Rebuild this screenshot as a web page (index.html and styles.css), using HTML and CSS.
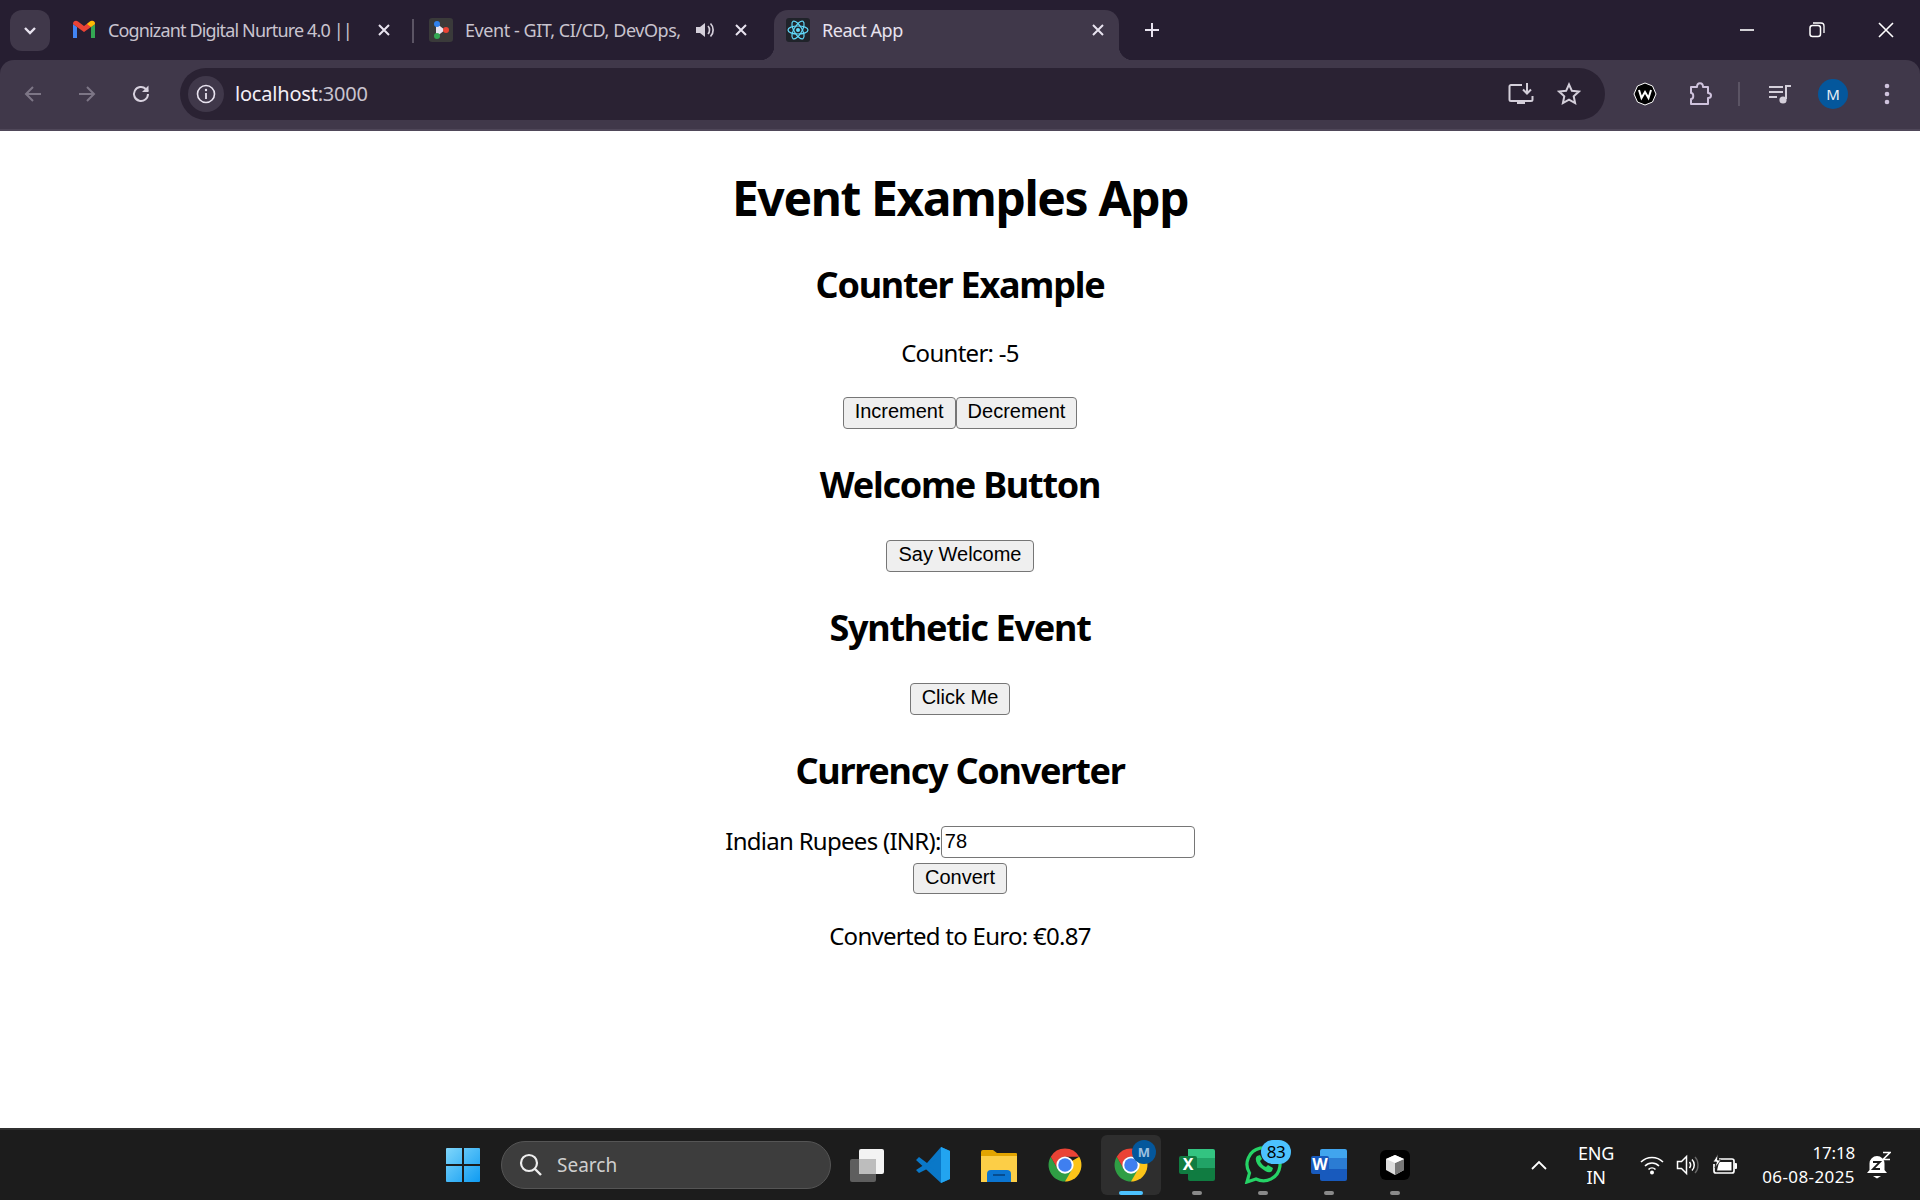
FILE: index.html
```html
<!DOCTYPE html>
<html lang="en">
<head>
<meta charset="utf-8">
<title>React App</title>
<link rel="stylesheet" href="styles.css">
</head>
<body>
<header class="chrome">
  <div class="tabstrip">
    <div class="tabsearch"><svg width="14" height="10" viewBox="0 0 14 10"><path d="M2 2l5 5 5-5" fill="none" stroke="#e8e3ef" stroke-width="2.4"/></svg></div>
    <div class="tab tab-one">
      <svg class="fav" width="24" height="24" viewBox="0 0 24 24"><path d="M1 20V6l4 3v11z" fill="#4285f4"/><path d="M19 20V9l4-3v14z" fill="#34a853"/><path d="M1 6c0-3 3-4 5-2.500L12 8l6-4.500C20 2 23 3 23 6l-4 3-7 5-7-5z" fill="#ea4335"/><path d="M19 9l4-3c0-3-3-4-5-2.500L15 6z" fill="#fbbc04"/></svg>
      <span class="tab-title">Cognizant Digital Nurture 4.0 ||</span>
      <svg class="x" width="14" height="14" viewBox="0 0 14 14"><path d="M2 2l10 10M12 2L2 12" stroke="#e8e3ef" stroke-width="2"/></svg>
    </div>
    <div class="tabsep"></div>
    <div class="tab tab-two">
      <svg class="fav" width="24" height="24" viewBox="0 0 24 24"><rect width="24" height="24" rx="3" fill="#3a3a3a"/><path d="M7 5l9 7-9 7z" fill="#e8e3ef"/><circle cx="8" cy="6" r="3" fill="#2f80ed"/><circle cx="17" cy="12" r="3" fill="#ea4335"/><circle cx="8" cy="18" r="3" fill="#34a853"/></svg>
      <span class="tab-title">Event - GIT, CI/CD, DevOps,</span>
      <svg class="spk" width="22" height="22" viewBox="0 0 22 22"><path d="M3 8h4l5-4v14l-5-4H3z" fill="#d4cfda"/><path d="M15 7c2 2 2 6 0 8M17.500 4.500c3.500 3.500 3.500 9.500 0 13" fill="none" stroke="#d4cfda" stroke-width="1.700"/></svg>
      <svg class="x" width="14" height="14" viewBox="0 0 14 14"><path d="M2 2l10 10M12 2L2 12" stroke="#e8e3ef" stroke-width="2"/></svg>
    </div>
    <div class="tab tab-active">
      <svg class="fav" width="24" height="24" viewBox="0 0 24 24"><rect width="24" height="24" rx="3" fill="#20232a"/><g fill="none" stroke="#61dafb" stroke-width="1.200"><ellipse cx="12" cy="12" rx="10" ry="4"/><ellipse cx="12" cy="12" rx="10" ry="4" transform="rotate(60 12 12)"/><ellipse cx="12" cy="12" rx="10" ry="4" transform="rotate(120 12 12)"/></g><circle cx="12" cy="12" r="2" fill="#61dafb"/></svg>
      <span class="tab-title active-title">React App</span>
      <svg class="x" width="14" height="14" viewBox="0 0 14 14"><path d="M2 2l10 10M12 2L2 12" stroke="#e8e3ef" stroke-width="2"/></svg>
    </div>
    <svg class="plus" width="18" height="18" viewBox="0 0 18 18"><path d="M9 2v14M2 9h14" stroke="#e8e3ef" stroke-width="2"/></svg>
    <div class="winctl">
      <svg width="16" height="16" viewBox="0 0 16 16"><path d="M1 8h14" stroke="#fff" stroke-width="1.600"/></svg>
      <svg width="16" height="16" viewBox="0 0 16 16"><rect x="1" y="3.500" width="10.500" height="11" rx="2.500" fill="none" stroke="#fff" stroke-width="1.500"/><path d="M4 1h8c2 0 3 1 3 3v7" fill="none" stroke="#fff" stroke-width="1.300"/></svg>
      <svg width="16" height="16" viewBox="0 0 16 16"><path d="M1 1l14 14M15 1L1 15" stroke="#fff" stroke-width="1.600"/></svg>
    </div>
  </div>
  <div class="toolbar">
    <svg class="nav nav-back" width="20" height="20" viewBox="0 0 20 20"><path d="M18 10H3M10 3l-7 7 7 7" fill="none" stroke="#7d7686" stroke-width="2"/></svg>
    <svg class="nav nav-fwd" width="20" height="20" viewBox="0 0 20 20"><path d="M2 10h15M10 3l7 7-7 7" fill="none" stroke="#7d7686" stroke-width="2"/></svg>
    <svg class="nav nav-reload" width="22" height="22" viewBox="0 0 22 22"><path d="M18 11a7 7 0 1 1-2.200-5.100L18 8" fill="none" stroke="#d8d2df" stroke-width="2"/><path d="M18.500 2.500v6.500H12z" fill="#d8d2df"/></svg>
    <div class="omnibox">
      <div class="siteinfo"><svg width="20" height="20" viewBox="0 0 20 20"><circle cx="10" cy="10" r="8.500" fill="none" stroke="#e8e3ef" stroke-width="1.600"/><path d="M10 9v6" stroke="#e8e3ef" stroke-width="1.800"/><circle cx="10" cy="6" r="1.200" fill="#e8e3ef"/></svg></div>
      <span class="url">localhost<span class="url-port">:3000</span></span>
      <svg class="om-install" width="26" height="24" viewBox="0 0 26 24"><path d="M14 3H3a1.500 1.500 0 0 0-1.500 1.500v13A1.500 1.500 0 0 0 3 19h20a1.500 1.500 0 0 0 1.500-1.500V14" fill="none" stroke="#d4cfda" stroke-width="2"/><path d="M9 19h8v3H9z" fill="#d4cfda"/><path d="M19 1v10M15 7.500l4 4 4-4" fill="none" stroke="#d4cfda" stroke-width="2"/></svg>
      <svg class="om-star" width="24" height="24" viewBox="0 0 24 24"><path d="M12 2.500l2.900 6.300 6.900.8-5.100 4.700 1.400 6.800-6.100-3.400-6.100 3.400 1.400-6.800-5.100-4.700 6.900-.8z" fill="none" stroke="#d4cfda" stroke-width="2"/></svg>
    </div>
    <svg class="tb-w" width="24" height="24" viewBox="0 0 24 24"><path d="M12 1l7.500 3 3.500 8-3.500 8-7.500 3-7.500-3L1 12l3.500-8z" fill="#000" stroke="#fff" stroke-width="1"/><path d="M6 8l2.500 8 3.500-6 3.500 6L18 8" fill="none" stroke="#fff" stroke-width="2"/></svg>
    <svg class="tb-puzzle" width="24" height="26" viewBox="0 0 24 26"><path d="M3 6h6c0-5 6-5 6 0h5v6c4 0 4 5 0 5v6H3v-5c3 0 3-6 0-6z" fill="none" stroke="#cfc3dd" stroke-width="2" stroke-linejoin="round"/></svg>
    <div class="tb-sep"></div>
    <svg class="tb-media" width="24" height="22" viewBox="0 0 24 22"><path d="M1 4h14M1 9h14M1 14h8" stroke="#d4cfda" stroke-width="2"/><path d="M18 16V3h5" fill="none" stroke="#d4cfda" stroke-width="2"/><circle cx="15" cy="17" r="3.600" fill="#d4cfda"/></svg>
    <div class="avatar">M</div>
    <svg class="tb-menu" width="6" height="22" viewBox="0 0 6 22"><circle cx="3" cy="3" r="2.300" fill="#cfc3dd"/><circle cx="3" cy="11" r="2.300" fill="#cfc3dd"/><circle cx="3" cy="19" r="2.300" fill="#cfc3dd"/></svg>
  </div>
</header>

<main class="page">
  <h1 class="title">Event Examples App</h1>
  <section>
    <h2 class="heading">Counter Example</h2>
    <p class="line">Counter: -5</p>
    <div class="row row-after-p"><button class="btn">Increment</button><button class="btn">Decrement</button></div>
  </section>
  <section>
    <h2 class="heading">Welcome Button</h2>
    <div class="row"><button class="btn">Say Welcome</button></div>
  </section>
  <section>
    <h2 class="heading">Synthetic Event</h2>
    <div class="row"><button class="btn">Click Me</button></div>
  </section>
  <section>
    <h2 class="heading">Currency Converter</h2>
    <div class="row"><label class="inr">Indian Rupees (INR):</label><input class="field" value="78"></div>
    <div class="row row-convert"><button class="btn btn-convert">Convert</button></div>
    <p class="line line-result">Converted to Euro: €0.87</p>
  </section>
</main>

<footer class="taskbar">
  <svg class="ti ti-win" width="36" height="36" viewBox="0 0 36 36"><defs><linearGradient id="w" x1="0" y1="0" x2="1" y2="1"><stop offset="0" stop-color="#7fd6fb"/><stop offset="1" stop-color="#0e9bf2"/></linearGradient></defs><path d="M1 2a1 1 0 0 1 1-1h15v16H1zM19 1h15a1 1 0 0 1 1 1v15H19zM1 19h16v16H2a1 1 0 0 1-1-1zM19 19h16v15a1 1 0 0 1-1 1H19z" fill="url(#w)"/></svg>
  <div class="search">
    <svg width="26" height="26" viewBox="0 0 26 26"><circle cx="11" cy="11" r="8" fill="none" stroke="#eee" stroke-width="2.200"/><path d="M17 17l6 6" stroke="#eee" stroke-width="2.400"/></svg>
    <span class="search-text">Search</span>
  </div>
  <div class="apps">
    <div class="app"><svg width="36" height="36" viewBox="0 0 36 36"><rect x="1" y="12" width="26" height="23" rx="2" fill="#5e5e5e"/><rect x="10" y="2" width="25" height="25" rx="2" fill="#f3f3f3"/><rect x="10" y="12" width="17" height="15" fill="#bdbdbd"/></svg></div>
    <div class="app"><svg width="38" height="38" viewBox="0 0 38 38"><path d="M27 1l9 4v28l-9 4L2 14l3-3 8 6z" fill="#0a78c8"/><path d="M27 1l9 4v28l-9 4z" fill="#22a4f0"/><path d="M27 10L13 19l14 10zM2 24l11-7 4 4-12 6z" fill="#0a78c8"/></svg></div>
    <div class="app"><svg width="38" height="36" viewBox="0 0 38 36"><path d="M1 5a2 2 0 0 1 2-2h10l4 3h19a1 1 0 0 1 1 1v5H1z" fill="#e2a400"/><path d="M1 9h36v26H1z" fill="#fcce47"/><path d="M7 35v-8a4 4 0 0 1 4-4h16a4 4 0 0 1 4 4v8z" fill="#0b75d1"/><path d="M13 28h12" stroke="#063f78" stroke-width="1.500"/></svg></div>
    <div class="app"><svg class="chr" width="36" height="36" viewBox="0 0 48 48"><path d="M43 13A22 22 0 0 1 24 46L24 24z" fill="#fcc419"/><path d="M5 13A22 22 0 0 0 24 46L33.500 29.500 14.500 29.500z" fill="#2f9e44"/><path d="M24 2A22 22 0 0 1 43 13H24a11 11 0 0 0-9.500 16.500L5 13A22 22 0 0 1 24 2z" fill="#ea4335"/><circle cx="24" cy="24" r="11.500" fill="#fff"/><circle cx="24" cy="24" r="9" fill="#3f7ff0"/></svg></div>
    <div class="app app-active"><svg class="chr" width="36" height="36" viewBox="0 0 48 48"><path d="M43 13A22 22 0 0 1 24 46L24 24z" fill="#fcc419"/><path d="M5 13A22 22 0 0 0 24 46L33.500 29.500 14.500 29.500z" fill="#2f9e44"/><path d="M24 2A22 22 0 0 1 43 13H24a11 11 0 0 0-9.500 16.500L5 13A22 22 0 0 1 24 2z" fill="#ea4335"/><circle cx="24" cy="24" r="11.500" fill="#fff"/><circle cx="24" cy="24" r="9" fill="#3f7ff0"/></svg><span class="chip-m">M</span><span class="bar bar-on"></span></div>
    <div class="app"><svg width="36" height="34" viewBox="0 0 36 34"><path d="M9 1h25a2 2 0 0 1 2 2v7H9z" fill="#33c481"/><path d="M9 10h13v10H9z" fill="#21a366"/><path d="M22 10h14v10H22z" fill="#21a366"/><path d="M9 20h27v11a2 2 0 0 1-2 2H11a2 2 0 0 1-2-2z" fill="#107c41"/><rect y="8" width="18" height="18" rx="2" fill="#107c41"/></svg><span class="app-letter">X</span><span class="bar"></span></div>
    <div class="app"><svg width="38" height="38" viewBox="0 0 38 38"><path d="M3 36l2.500-9A16.500 16.500 0 1 1 12 33z" fill="none" stroke="#25d366" stroke-width="3.200"/><path d="M13 10c-3 3 0 9 4 12s8 6 11 3l1-3-5-3-2 2c-3-1-5-4-6-6l2-2-2-4z" fill="#25d366"/></svg><span class="badge">83</span><span class="bar"></span></div>
    <div class="app"><svg width="36" height="34" viewBox="0 0 36 34"><path d="M9 3a2 2 0 0 1 2-2h23a2 2 0 0 1 2 2v7H9z" fill="#41a5ee"/><path d="M9 10h27v11H9z" fill="#2b7cd3"/><path d="M9 21h27v10a2 2 0 0 1-2 2H11a2 2 0 0 1-2-2z" fill="#185abd"/><rect y="8" width="18" height="18" rx="2" fill="#185abd"/></svg><span class="app-letter">W</span><span class="bar"></span></div>
    <div class="app"><svg width="30" height="30" viewBox="0 0 30 30"><rect width="30" height="30" rx="6" fill="#000"/><path d="M15 5l9 4v11l-9 5-9-5V9z" fill="#ddd"/><path d="M15 13l9-4v11l-9 5z" fill="#777"/><path d="M6 9l9 4 9-4-9-4z" fill="#fff"/></svg><span class="bar"></span></div>
  </div>
  <svg class="tray-chev" width="18" height="10" viewBox="0 0 18 10"><path d="M2 9l7-7 7 7" fill="none" stroke="#fff" stroke-width="1.800"/></svg>
  <div class="lang">ENG<br>IN</div>
  <svg class="tr-wifi" width="24" height="20" viewBox="0 0 24 20"><path d="M1 7c6-6 16-6 22 0M5 11c4-4 10-4 14 0M8.500 14.500c2-2 5-2 7 0" fill="none" stroke="#fff" stroke-width="1.600"/><circle cx="12" cy="17.500" r="2" fill="#fff"/></svg>
  <svg class="tr-vol" width="24" height="22" viewBox="0 0 24 22"><path d="M1.500 7.500h4l5-5v17l-5-5h-4z" fill="none" stroke="#fff" stroke-width="1.500"/><path d="M13.500 8c1.500 2 1.500 4 0 6M16 5.500c3 3 3 8 0 11" fill="none" stroke="#fff" stroke-width="1.500"/><path d="M19 3c4 4 4 12 0 16" fill="none" stroke="#666" stroke-width="1.400"/></svg>
  <svg class="tr-bat" width="26" height="24" viewBox="0 0 26 24"><path d="M8 6h13a2 2 0 0 1 2 2v10a2 2 0 0 1-2 2H5a2 2 0 0 1-2-2V11" fill="none" stroke="#fff" stroke-width="1.700"/><path d="M8 9h12.500v8.500H6z" fill="#fff"/><rect x="23.500" y="10" width="2.500" height="6" rx="1" fill="#fff"/><path d="M7 1L2 9h3.500L4 15l6-8H6.500z" fill="#fff" stroke="#1c1c1c" stroke-width=".8"/></svg>
  <div class="clock"><span>17:18</span><span class="date">06-08-2025</span></div>
  <svg class="tr-bell" width="24" height="28" viewBox="0 0 24 28"><path d="M10 5a7.500 7.500 0 0 1 7.500 7.500V19l2.500 3H0l2.500-3v-6.500A7.500 7.500 0 0 1 10 5z" fill="#fff"/><path d="M6 25h8l-4 2.500z" fill="#fff"/><path d="M6 11h7l-7 7h7" fill="none" stroke="#1c1c1c" stroke-width="1.800"/><path d="M16 1.500h7l-7 7h7" fill="none" stroke="#fff" stroke-width="1.600"/></svg>
</footer>
</body>
</html>
```

FILE: styles.css
```css
* { box-sizing: border-box; }
html, body { margin: 0; padding: 0; }
body {
  width: 1920px;
  height: 1200px;
  overflow: hidden;
  display: flex;
  flex-direction: column;
  background: #fff;
  font-family: "Noto Sans", "Open Sans", sans-serif;
  color: #000;
}

/* Browser chrome */
.chrome { height: 131px; background: #261e31; flex: none; }
.tabstrip { height: 60px; display: flex; align-items: flex-start; padding-left: 10px; }
.tabsearch {
  width: 40px; height: 41px; margin-top: 10px;
  background: #40384a; border-radius: 12px;
  display: flex; align-items: center; justify-content: center;
}
.tab { display: flex; align-items: center; height: 50px; margin-top: 10px; position: relative; }
.tab-title { font-size: 18px; color: #c9c4cf; white-space: nowrap; overflow: hidden; letter-spacing: -.45px; line-height: 24px; }
.active-title { color: #e8e3ef; }
.fav { flex: none; }
.tab-one { width: 332px; margin-left: 22px; padding-bottom: 10px; }
.tab-one .tab-title { width: 249px; margin-left: 12px; letter-spacing: -.85px; flex: none; }
.tab-one .x { margin-left: 20px; }
.tabsep { width: 2px; height: 24px; background: #5b5464; margin: 19px 0 0 8px; }
.tab-two { width: 345px; margin-left: 15px; padding-bottom: 10px; }
.tab-two .tab-title { width: 216px; margin-left: 12px; }
.tab-two .spk { margin-left: 12px; }
.tab-two .x { margin-left: 19px; }
.tab-active {
  width: 345px; margin-left: 0; padding-left: 12px; padding-bottom: 10px;
  background: #40384a; border-radius: 14px 14px 0 0;
}
.tab-active::before,
.tab-active::after {
  content: ""; position: absolute; bottom: 0; width: 14px; height: 14px;
}
.tab-active::before { left: -14px; background: radial-gradient(circle at 0 0, transparent 14px, #40384a 14.500px); }
.tab-active::after { right: -14px; background: radial-gradient(circle at 100% 0, transparent 14px, #40384a 14.500px); }
.tab-active .tab-title { width: 269px; margin-left: 12px; }
.plus { margin: 21px 0 0 24px; flex: none; }
.winctl { margin-left: auto; margin-top: 22px; width: 155px; margin-right: 26px; display: flex; justify-content: space-between; }

.toolbar {
  height: 71px; background: #40384a; border-radius: 14px 14px 0 0;
  border-bottom: 2px solid #4f4759;
  display: flex; align-items: center;
  padding: 0 0 2px 23px;
}
.nav { flex: none; }
.nav-fwd { margin-left: 34px; }
.nav-reload { margin-left: 33px; }
.omnibox {
  width: 1425px; height: 52px; margin-left: 28px;
  background: #2a2233; border-radius: 26px;
  display: flex; align-items: center; padding-left: 8px;
}
.siteinfo {
  width: 36px; height: 36px; border-radius: 50%; background: #40384a;
  display: flex; align-items: center; justify-content: center; flex: none;
}
.url { font-size: 20px; color: #f3eff6; margin-left: 11px; letter-spacing: -.2px; line-height: 28px; padding-top: 1px; }
.url-port { color: #c9c4cf; }
.om-install { margin-left: auto; flex: none; }
.om-star { margin-left: 23px; margin-right: 24px; flex: none; }
.tb-w { margin-left: 28px; flex: none; }
.tb-puzzle { margin-left: 31px; flex: none; }
.tb-sep { width: 2px; height: 24px; background: #5b5464; margin-left: 26px; flex: none; }
.tb-media { margin-left: 28px; flex: none; }
.avatar {
  width: 30px; height: 30px; border-radius: 50%; background: #04579c; color: #e8eef5;
  font-size: 15px; display: flex; align-items: center; justify-content: center;
  margin-left: 26px; flex: none;
}
.tb-menu { margin-left: 36px; flex: none; }

/* Page */
.page { flex: 1; min-height: 0; text-align: center; }
.title { margin: 35px 0 31px; font-size: 48px; line-height: 64px; font-weight: 700; letter-spacing: -1.4px; }
.heading { margin: 32px 0 0; font-size: 36px; line-height: 48px; font-weight: 700; letter-spacing: -1.25px; }
.title + section .heading { margin-top: 0; }
.line { margin: 28px 0 0; font-size: 24px; line-height: 32px; letter-spacing: -.72px; }
.row { height: 32px; display: flex; justify-content: center; align-items: stretch; }
.heading + .row { margin-top: 31px; }
.row-after-p { margin-top: 28px; }
.row-convert { margin-top: 5px; height: 31px; }
.line-result { margin-top: 26px; }
.btn {
  font-family: "Liberation Sans", Arial, sans-serif;
  font-size: 20px; line-height: 23px;
  padding: 0 11px 3px; margin: 0;
  background: #efefef; color: #000;
  border: 1px solid #767676; border-radius: 4px;
}
.inr { font-size: 24px; line-height: 30px; letter-spacing: -.72px; }
.field {
  width: 254px; height: 32px; margin: 0; padding: 0 4px 2px 3px;
  font-family: "Liberation Sans", Arial, sans-serif; font-size: 20px;
  border: 1px solid #767676; border-radius: 4px; background: #fff; color: #000;
}

/* Taskbar */
.taskbar {
  height: 72px; flex: none; background: #1c1c1c; border-top: 2px solid #303030;
  display: flex; align-items: center; padding-left: 445px; position: relative;
}
.ti-win { flex: none; }
.search {
  width: 330px; height: 48px; margin-left: 20px;
  background: #3d3d3d; border: 1px solid #555; border-radius: 24px;
  display: flex; align-items: center; padding-left: 16px; flex: none;
}
.search-text { font-size: 19px; color: #cfcfcf; margin-left: 13px; flex: none; }
.apps { display: flex; margin-left: 3px; flex: none; }
.app { width: 66px; height: 60px; display: flex; align-items: center; justify-content: center; position: relative; border-radius: 6px; flex: none; }
.app-active { background: #2e2e2e; width: 60px; margin: 0 3px; }
.bar { position: absolute; left: 50%; bottom: 0; width: 10px; height: 4px; margin-left: -5px; border-radius: 2px; background: #8a8a8a; }
.bar-on { width: 24px; margin-left: -12px; background: #4cc2ff; }
.chip-m {
  position: absolute; right: 5px; top: 5px; width: 24px; height: 24px; border-radius: 50%;
  background: #04579c; color: #9cc0e0; font-size: 13px; font-weight: 700; line-height: 24px; text-align: center;
}
.app-letter {
  position: absolute; left: 15px; top: 20px; width: 18px; text-align: center;
  font-size: 16px; line-height: 18px; font-weight: 700; color: #fff;
}
.badge {
  position: absolute; right: 5px; top: 5px; width: 30px; height: 24px; border-radius: 12px;
  background: #4cc2ff; color: #000; font-size: 17px; line-height: 24px; text-align: center; letter-spacing: -.5px;
}
.tray-chev { margin-left: 102px; flex: none; }
.lang { width: 60px; margin-left: 18px; font-size: 18px; line-height: 24px; color: #fff; text-align: center; letter-spacing: -.3px; flex: none; }
.tr-wifi { margin-left: 14px; flex: none; }
.tr-vol { margin-left: 12px; flex: none; }
.tr-bat { margin-left: 11px; flex: none; }
.clock { width: 110px; margin-left: 8px; display: flex; flex-direction: column; align-items: flex-end; font-size: 17px; line-height: 24px; color: #fff; letter-spacing: -.2px; flex: none; }
.date { letter-spacing: .4px; }
.tr-bell { margin-left: 12px; flex: none; }
```
